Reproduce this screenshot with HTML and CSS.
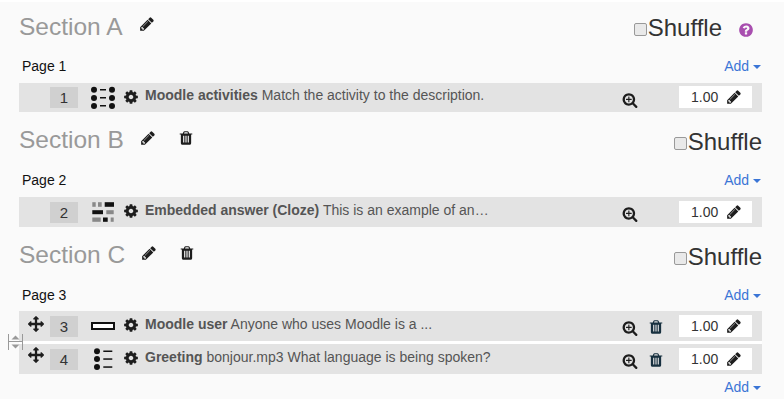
FILE: index.html
```html
<!DOCTYPE html>
<html lang="en">
<head>
  <meta charset="UTF-8" />
  <meta name="viewport" content="width=device-width, initial-scale=1.0"/>
  <title>Edit quiz</title>
  <link rel="stylesheet" href="styles.css">
</head>
<body>

  <svg class="sprites" xmlns="http://www.w3.org/2000/svg">
    <symbol id="i-pencil" viewBox="0 0 1792 1792"><path d="M491 1536l91-91-235-235-91 91v107h128v128h107zm523-928q0-22-22-22-10 0-17 7l-542 542q-7 7-7 17 0 22 22 22 10 0 17-7l542-542q7-7 7-17zm-54-192l416 416-832 832h-416v-416zm683 96q0 53-37 90l-166 166-416-416 166-165q36-38 90-38 53 0 91 38l235 234q37 39 37 91z"/></symbol>
    <symbol id="i-cog" viewBox="0 0 1792 1792"><path d="M1152 896q0-106-75-181t-181-75-181 75-75 181 75 181 181 75 181-75 75-181zm512-109v222q0 12-8 23t-20 13l-185 28q-19 54-39 91 35 50 107 138 10 12 10 25t-9 23q-27 37-99 108t-94 71q-12 0-26-9l-138-108q-44 23-91 38-16 136-29 186-7 28-36 28h-222q-14 0-24.500-8.500t-11.500-21.500l-28-184q-49-16-90-37l-141 107q-10 9-25 9-14 0-25-11-126-114-165-168-7-10-7-23 0-12 8-23 15-21 51-66.500t54-70.500q-27-50-41-99l-183-27q-13-2-21-12.500t-8-23.500v-222q0-12 8-23t19-13l186-28q14-46 39-92-40-57-107-138-10-12-10-24 0-10 9-23 26-36 98.500-107.500t94.500-71.500q13 0 26 10l138 107q44-23 91-38 16-136 29-186 7-28 36-28h222q14 0 24.500 8.500t11.500 21.500l28 184q49 16 90 37l142-107q9-9 24-9 13 0 25 10 129 119 165 170 7 8 7 22 0 12-8 23-15 21-51 66.500t-54 70.500q26 50 41 98l183 28q13 2 21 12.500t8 23.500z"/></symbol>
    <symbol id="i-trash" viewBox="0 0 1792 1792"><path d="M704 1376v-704q0-14-9-23t-23-9h-64q-14 0-23 9t-9 23v704q0 14 9 23t23 9h64q14 0 23-9t9-23zm256 0v-704q0-14-9-23t-23-9h-64q-14 0-23 9t-9 23v704q0 14 9 23t23 9h64q14 0 23-9t9-23zm256 0v-704q0-14-9-23t-23-9h-64q-14 0-23 9t-9 23v704q0 14 9 23t23 9h64q14 0 23-9t9-23zm-544-992h448l-48-117q-7-9-17-11h-317q-10 2-17 11zm928 32v64q0 14-9 23t-23 9h-96v948q0 83-47 143.500t-113 60.500h-832q-66 0-113-58.500t-47-141.500v-952h-96q-14 0-23-9t-9-23v-64q0-14 9-23t23-9h309l70-167q15-37 54-63t79-26h320q40 0 79 26t54 63l70 167h309q14 0 23 9t9 23z"/></symbol>
    <symbol id="i-search" viewBox="0 0 1792 1792"><path d="M1088 800v64q0 13-9.500 22.500t-22.500 9.500h-224v224q0 13-9.500 22.500t-22.500 9.500h-64q-13 0-22.500-9.500t-9.500-22.500v-224h-224q-13 0-22.500-9.500t-9.500-22.500v-64q0-13 9.500-22.500t22.500-9.500h224v-224q0-13 9.500-22.500t22.500-9.500h64q13 0 22.500 9.500t9.500 22.500v224h224q13 0 22.500 9.500t9.500 22.500zm128 32q0-185-131.500-316.500t-316.500-131.500-316.500 131.500-131.500 316.500 131.500 316.500 316.500 131.500 316.500-131.500 131.500-316.500zm512 832q0 53-37.500 90.500t-90.500 37.500q-54 0-90-38l-343-342q-179 124-399 124-143 0-273.500-55.500t-225-150-150-225-55.500-273.500 55.500-273.500 150-225 225-150 273.500-55.500 273.500 55.500 225 150 150 225 55.500 273.500q0 220-124 399l343 343q37 37 37 90z"/></symbol>
    <symbol id="i-help" viewBox="0 0 1792 1792"><path d="M1024 1376v-192q0-14-9-23t-23-9h-192q-14 0-23 9t-9 23v192q0 14 9 23t23 9h192q14 0 23-9t9-23zm256-672q0-88-55.500-163t-138.500-116-170-41q-243 0-371 213-15 24 8 42l132 100q7 6 19 6 16 0 25-12 53-68 86-92 34-24 86-24 48 0 85.500 26t37.500 59q0 38-20 61t-68 45q-63 28-115.500 86.500t-52.500 125.500v36q0 14 9 23t23 9h192q14 0 23-9t9-23q0-19 21.500-49.500t54.500-49.500q32-18 49-28.500t46-35 44.500-48 28-60.500 12.500-81zm384 192q0 209-103 385.500t-279.500 279.500-385.500 103-385.500-103-279.500-279.500-103-385.500 103-385.500 279.500-279.500 385.500-103 385.500 103 279.500 279.500 103 385.500z"/></symbol>
    <symbol id="i-move" viewBox="0 0 1792 1792"><path d="M1792 896q0 26-19 45l-256 256q-19 19-45 19t-45-19-19-45v-128h-384v384h128q26 0 45 19t19 45-19 45l-256 256q-19 19-45 19t-45-19l-256-256q-19-19-19-45t19-45 45-19h128v-384h-384v128q0 26-19 45t-45 19-45-19l-256-256q-19-19-19-45t19-45l256-256q19-19 45-19t45 19 19 45v128h384v-384h-128q-26 0-45-19t-19-45 19-45l256-256q19-19 45-19t45 19l256 256q19 19 19 45t-19 45-45 19h-128v384h384v-128q0-26 19-45t45-19 45 19l256 256q19 19 19 45z"/></symbol>
  </svg>

  <div class="quiz">

    <div class="section-head first">
      <h3 class="section-name">Section A</h3>
      <svg class="icon pencil-title"><use href="#i-pencil"/></svg>
      <label class="shuffle"><input type="checkbox" />Shuffle</label>
      <svg class="icon help"><use href="#i-help"/></svg>
    </div>
    <div class="page-line"><span>Page 1</span><a class="add">Add <i class="caret"></i></a></div>
    <div class="slot slot-short">
      <span class="handle"></span>
      <span class="num">1</span>
      <svg class="qtype" viewBox="0 0 24 24">
        <circle cx="3" cy="3.700" r="3"/><circle cx="3" cy="12" r="3"/><circle cx="3" cy="20" r="3"/>
        <circle cx="21" cy="3.700" r="3"/><circle cx="21" cy="12" r="3"/><circle cx="21" cy="20" r="3"/>
        <rect x="9" y="3" width="6" height="1.500"/><rect x="9" y="11" width="6" height="1.500"/><rect x="9" y="19" width="6" height="1.500"/>
      </svg>
      <svg class="icon cog"><use href="#i-cog"/></svg>
      <p class="qtext"><b>Moodle activities</b> Match the activity to the description.</p>
      <svg class="icon search"><use href="#i-search"/></svg>
      <span class="score">1.00<svg class="icon pencil"><use href="#i-pencil"/></svg></span>
    </div>

    <div class="section-head">
      <h3 class="section-name">Section B</h3>
      <svg class="icon pencil-title"><use href="#i-pencil"/></svg>
      <svg class="icon trash-title"><use href="#i-trash"/></svg>
      <label class="shuffle"><input type="checkbox" />Shuffle</label>
    </div>
    <div class="page-line"><span>Page 2</span><a class="add">Add <i class="caret"></i></a></div>
    <div class="slot">
      <span class="handle"></span>
      <span class="num">2</span>
      <svg class="qtype" viewBox="0 0 24 24">
        <rect x="1.300" y="2.200" width="3.400" height="4.600" fill="#888"/><rect x="7" y="2.200" width="3.700" height="4.600" fill="#888"/><rect x="13.700" y="2.200" width="9.300" height="4.600"/>
        <rect x="1.300" y="10.200" width="10.700" height="4"/><rect x="15.300" y="10.200" width="7.400" height="4" fill="#888"/>
        <rect x="1.300" y="17.500" width="8.400" height="4.300" fill="#888"/><rect x="12" y="17.500" width="4.700" height="4.300"/><rect x="19.700" y="17.500" width="3" height="4.300" fill="#888"/>
      </svg>
      <svg class="icon cog"><use href="#i-cog"/></svg>
      <p class="qtext"><b>Embedded answer (Cloze)</b> This is an example of an…</p>
      <svg class="icon search"><use href="#i-search"/></svg>
      <span class="score">1.00<svg class="icon pencil"><use href="#i-pencil"/></svg></span>
    </div>

    <div class="section-head">
      <h3 class="section-name">Section C</h3>
      <svg class="icon pencil-title"><use href="#i-pencil"/></svg>
      <svg class="icon trash-title"><use href="#i-trash"/></svg>
      <label class="shuffle"><input type="checkbox" />Shuffle</label>
    </div>
    <div class="page-line page-line-short"><span>Page 3</span><a class="add">Add <i class="caret"></i></a></div>
    <div class="slot">
      <span class="handle"><svg class="icon move"><use href="#i-move"/></svg></span>
      <span class="num">3</span>
      <svg class="qtype" viewBox="0 0 24 24">
        <rect x="1" y="9" width="22" height="6" fill="#fff" stroke="#111" stroke-width="2"/>
      </svg>
      <svg class="icon cog"><use href="#i-cog"/></svg>
      <p class="qtext"><b>Moodle user</b> Anyone who uses Moodle is a ...</p>
      <svg class="icon search"><use href="#i-search"/></svg>
      <svg class="icon trash"><use href="#i-trash"/></svg>
      <span class="score">1.00<svg class="icon pencil"><use href="#i-pencil"/></svg></span>
    </div>
    <div class="slot slot-next">
      <span class="handle"><svg class="icon move"><use href="#i-move"/></svg></span>
      <span class="num">4</span>
      <svg class="qtype" viewBox="0 0 24 24">
        <circle cx="6" cy="4.200" r="3"/><circle cx="6" cy="12" r="3"/><circle cx="6" cy="20" r="3"/>
        <rect x="12.300" y="3.500" width="9" height="1.500"/><rect x="12.300" y="11.300" width="9" height="1.500"/><rect x="12.300" y="19.300" width="9" height="1.500"/>
      </svg>
      <svg class="icon cog"><use href="#i-cog"/></svg>
      <p class="qtext"><b>Greeting</b> bonjour.mp3 What language is being spoken?</p>
      <svg class="icon search"><use href="#i-search"/></svg>
      <svg class="icon trash"><use href="#i-trash"/></svg>
      <span class="score">1.00<svg class="icon pencil"><use href="#i-pencil"/></svg></span>
    </div>
    <div class="page-line last"><a class="add">Add <i class="caret"></i></a></div>

    <svg class="page-break" viewBox="0 0 15 16">
      <path d="M.5 0v16M14.500 0v16" stroke="#999" fill="none"/>
      <path d="M1 7.500h13" stroke="#999" fill="none"/>
      <path d="M7.500 1.500l4 4h-8zM7.500 14.500l4-4h-8z" fill="#999"/>
    </svg>
  </div>

</body>
</html>
```

FILE: styles.css
```css
* {
  box-sizing: border-box;
}

body {
  margin: 0;
  padding-top: 2px;
  font-family: "Liberation Sans", Arial, sans-serif;
  font-size: 14px;
  color: #333;
  background: #fff;
}

.sprites {
  display: none;
}

.quiz {
  position: relative;
  height: 397px;
  padding: 0 22px 0 19px;
  background: #fafafa;
}

.icon {
  display: block;
  flex: none;
  width: 16px;
  height: 16px;
  fill: #1d1d1d;
}

.section-head {
  display: flex;
  align-items: center;
  height: 53px;
  padding-top: 2px;
}

.section-head.first {
  height: 49px;
  padding: 0;
}

.section-name {
  margin: 0;
  font-size: 24.5px;
  font-weight: normal;
  color: #999;
}

.pencil-title {
  margin: -4px 0 0 16px;
}

.first .pencil-title {
  margin-top: -6px;
}

.trash-title {
  margin: -4px 0 0 22px;
}

.shuffle {
  display: flex;
  align-items: center;
  margin: 4px 0 0 auto;
  font-size: 24px;
  color: #333;
}

.first .shuffle {
  margin-top: 2px;
}

.shuffle input {
  appearance: none;
  width: 13px;
  height: 13px;
  margin: 3px 1px 0 0;
  background: #e9e9e9;
  border: 1px solid #999;
  border-radius: 2px;
}

.help {
  margin: 6px 8px 0 16px;
  fill: #a84eaf;
}

.page-line {
  display: flex;
  justify-content: space-between;
  align-items: center;
  height: 32px;
  padding: 0 1px 3px 3px;
  color: #111;
}

.page-line-short {
  height: 31px;
  padding-bottom: 1px;
}

.page-line.last {
  height: 26px;
  padding-bottom: 0;
  justify-content: flex-end;
}

.add {
  color: #3a75d6;
}

.caret {
  display: inline-block;
  vertical-align: 2px;
  border-top: 4px solid #3a75d6;
  border-left: 4px solid transparent;
  border-right: 4px solid transparent;
}

.slot {
  display: flex;
  align-items: center;
  height: 30px;
  background: #e3e3e3;
  color: #555;
}

.slot-short {
  height: 29px;
}

.slot-short .qtext {
  margin-top: -5px;
}

.slot-next {
  height: 33px;
  border-top: 3px solid #fff;
}

.handle {
  flex: none;
  align-self: flex-start;
  width: 31px;
  padding: 5px 0 0 9px;
}

.slot-next .handle {
  padding-top: 3px;
}

.num {
  flex: none;
  width: 28px;
  height: 21px;
  line-height: 21px;
  font-size: 15px;
  text-align: center;
  background: #d0d0d0;
  color: #333;
}

.qtype {
  flex: none;
  width: 24px;
  height: 24px;
  margin-left: 13px;
  fill: #111;
}

.cog {
  margin: -2px 0 0 8px;
}

.qtext {
  flex: 1;
  margin: -4px 0 0 6px;
  white-space: nowrap;
  overflow: hidden;
}

.search {
  margin-top: 4px;
}

.trash {
  margin: 2px 0 0 10px;
  fill: #17303f;
}

.search + .score {
  margin-left: 41px;
}

.trash + .score {
  margin-left: 15px;
}

.score {
  display: flex;
  align-items: center;
  flex: none;
  width: 73px;
  height: 22px;
  margin-top: -1px;
  margin-right: 10px;
  padding-left: 12px;
  background: #fff;
  color: #333;
}

.pencil {
  margin-left: 8px;
}

.page-break {
  position: absolute;
  left: 8px;
  top: 332px;
  width: 15px;
  height: 16px;
}
```
